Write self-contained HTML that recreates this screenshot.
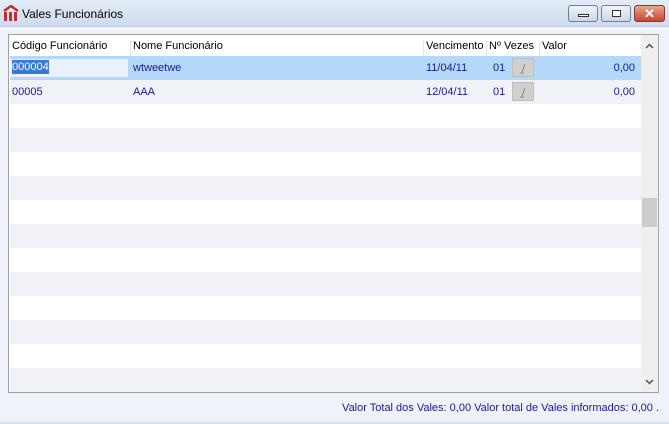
<!DOCTYPE html>
<html><head><style>
*{margin:0;padding:0;box-sizing:border-box}
body{width:669px;height:424px;background:#f0f2f9;font-family:"Liberation Sans",sans-serif;font-size:11px;position:relative;overflow:hidden}
.title{position:absolute;left:0;top:0;width:669px;height:27px;background:linear-gradient(#e3ebf6,#cfdcee);border-bottom:1px solid #b9c9df}
.title span{position:absolute;left:22px;top:7px;font-size:12px;color:#000}
.btn{position:absolute;top:5px;height:17px;border:1px solid #6d7e96;border-radius:3px;background:linear-gradient(#f2f5fa,#cbd6e6)}
.grid{position:absolute;left:8px;top:34px;width:651px;height:359px;border:1px solid #a0a0a0;border-right-color:#a8a8a8;background:#fff;overflow:hidden}
.hdr{position:absolute;left:1px;top:0;height:21px;width:631px;background:#fff}
.hdr div{position:absolute;top:5px;color:#000}
.sep{position:absolute;top:0;width:1px;height:21px;background:#e4e4e4}
.row{position:absolute;left:1px;width:631px;height:24px}
.row div{position:absolute;top:6px;color:#1a1a9a}
.sb{position:absolute;left:632px;top:0;width:17px;height:357px;background:#efefef}
.bt{position:absolute;left:502px;top:3px;width:22px;height:19px;background:#d0d0d0;border:1px solid #bdbdbd}
</style></head><body>
<div class="title">
<svg style="position:absolute;left:3px;top:5px" width="16" height="17" viewBox="0 0 16 17"><path d="M1 6 L8 1 L15 6" stroke="#c0302a" stroke-width="2.5" fill="none"/><rect x="1" y="7" width="3" height="9" fill="#c0302a"/><rect x="6" y="7" width="3" height="9" fill="#c0302a"/><rect x="11" y="7" width="3" height="9" fill="#c0302a"/></svg>
<span>Vales Funcionários</span>
<div class="btn" style="left:568px;width:30px"><div style="position:absolute;left:9px;top:8px;width:11px;height:3px;border:1px solid #333;background:#fff"></div></div>
<div class="btn" style="left:601px;width:30px"><div style="position:absolute;left:10px;top:4px;width:9px;height:7px;border:1px solid #333;background:#fff"></div></div>
<div class="btn" style="left:634px;width:31px;background:linear-gradient(#e8a595,#c4452f);border-color:#8a3b2e;color:#fff;font-weight:bold;text-align:center;font-size:13px;line-height:15px">✕</div>
</div>
<div class="grid">
<div class="hdr">
<div style="left:2px">Código Funcionário</div><div class="sep" style="left:120px"></div>
<div style="left:123px">Nome Funcionário</div><div class="sep" style="left:413px"></div>
<div style="left:416px">Vencimento</div><div class="sep" style="left:476px"></div>
<div style="left:479px">Nº Vezes</div><div class="sep" style="left:529px"></div>
<div style="left:532px">Valor</div>
</div>
<div class="row" style="top:21px;background:#b4d8f8">
<div style="left:0;top:3px;width:118px;height:18px;background:#e8f2fc"></div>
<div style="left:2px;top:4px;background:#3a78d8;color:#fff;padding:1px 0;height:14px">000004</div>
<div style="left:123px">wtweetwe</div><div style="left:416px">11/04/11</div><div style="left:483px">01</div>
<div class="bt" style="top:2px"><svg width="20" height="17" style="position:absolute;left:0;top:0"><path d="M9 13 L12 5 M7 14 H11" stroke="#888" stroke-width="1" fill="none"/></svg></div><div style="right:6px">0,00</div></div>
<div class="row" style="top:45px;background:#f1f2f8"><div style="left:2px">00005</div><div style="left:123px">AAA</div><div style="left:416px">12/04/11</div><div style="left:483px">01</div><div class="bt" style="top:2px"><svg width="20" height="17" style="position:absolute;left:0;top:0"><path d="M9 13 L12 5 M7 14 H11" stroke="#888" stroke-width="1" fill="none"/></svg></div><div style="right:6px">0,00</div></div>
<div class="row" style="top:69px;background:#fff"></div>
<div class="row" style="top:93px;background:#f1f2f8"></div>
<div class="row" style="top:117px;background:#fff"></div>
<div class="row" style="top:141px;background:#f1f2f8"></div>
<div class="row" style="top:165px;background:#fff"></div>
<div class="row" style="top:189px;background:#f1f2f8"></div>
<div class="row" style="top:213px;background:#fff"></div>
<div class="row" style="top:237px;background:#f1f2f8"></div>
<div class="row" style="top:261px;background:#fff"></div>
<div class="row" style="top:285px;background:#f1f2f8"></div>
<div class="row" style="top:309px;background:#fff"></div>
<div class="row" style="top:333px;background:#f1f2f8"></div>
<div class="sb">
<svg style="position:absolute;left:4px;top:8px" width="9" height="6"><path d="M1 5 L4.5 1.5 L8 5" stroke="#555" stroke-width="1.5" fill="none"/></svg>
<div style="position:absolute;left:1px;top:163px;width:15px;height:29px;background:#cdcdcd"></div>
<svg style="position:absolute;left:4px;top:344px" width="9" height="6"><path d="M1 1 L4.5 4.5 L8 1" stroke="#555" stroke-width="1.5" fill="none"/></svg>
</div>
</div>
<div style="position:absolute;right:10px;top:402px;color:#1a1a9a">Valor Total dos Vales: 0,00 Valor total de Vales informados: 0,00 .</div>
<div style="position:absolute;left:0;bottom:0;width:669px;height:2px;background:#d6e0ee"></div>
</body></html>
